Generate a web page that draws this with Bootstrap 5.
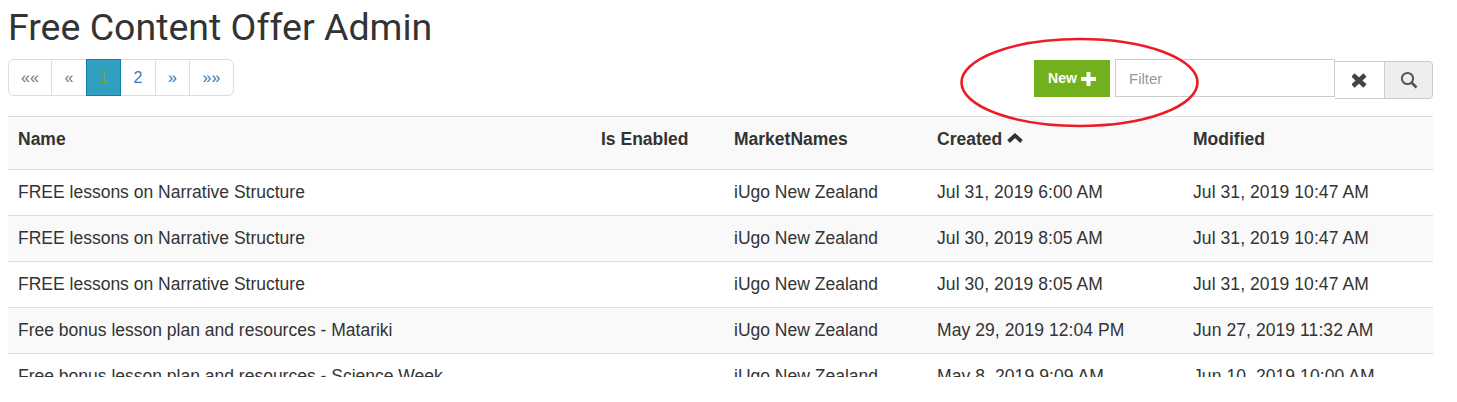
<!DOCTYPE html>
<html lang="en">
<head>
    <meta charset="UTF-8">
    <title>Free Content Offer Admin</title>
    <link href="https://cdn.jsdelivr.net/npm/bootstrap@5.3.0/dist/css/bootstrap.min.css" rel="stylesheet">
    <style>
        body { font-family: "Liberation Sans", Arial, sans-serif; font-size: 17.5px; color: #333; background: #fff; overflow: hidden; }
        .page-wrap { position: relative; padding: 7px 24px 0 8px; }
        .page-title { font-family: Roboto, sans-serif; font-size: 37.5px; font-weight: 400; line-height: 40px; margin: 0 0 12px; color: #333; }
        .toolbar { height: 57px; }
        .pager { margin: 0; }
        .pager .page-link { font-size: 16px; line-height: 20px; height: 37px; padding: 8px 0; text-align: center; color: #337ab7; border-color: #ddd; }
        .pager .page-link.muted-link { color: #777; }
        .pager .page-item.active .page-link { background: #329ec0; border-color: #0d83aa; color: #6ea82c; }
        .pg-first { width: 44px; }
        .pg-wide { width: 36px; }
        .pg-mid { width: 35px; }
        .pg-last { width: 45px; }
        .btn-new { width: 76px; height: 37px; margin-top: 1px; padding: 0; background: #72b01d; color: #fff; border: 0; border-radius: 0; font-size: 14px; font-weight: 700; }
        .btn-new:hover { background: #72b01d; color: #fff; }
        .filter-box { width: 220px; height: 38px; margin-left: 5px; border: 1px solid #ccc; border-radius: 0; padding: 6px 12px 6px 13px; font-size: 15px; font-family: "Liberation Sans", Arial, sans-serif; }
        .filter-box::placeholder { color: #999; }
        .tool-btn { width: 49px; height: 38px; margin-top: 2px; padding: 0; border: 1px solid #ccc; background: #fff; display: flex; align-items: center; justify-content: center; }
        .tool-clear { border-radius: 0; border-right: 0; border-left: 0; }
        .tool-search { background: #eee; border-radius: 0 4px 4px 0; }
        .offer-scroll { height: 261px; overflow: hidden; }
        .offer-table { margin: 0; table-layout: fixed; width: 1425px; color: #333; }
        .offer-table th, .offer-table td { padding: 0 10px; border-color: #ddd; vertical-align: middle; font-size: 17.5px; color: #333; line-height: 22px; }
        .offer-table thead tr { height: 53px; border-top: 1px solid #ddd; background: #f9f9f9; }
        .offer-table thead th { border-bottom: 1px solid #ddd; padding-bottom: 8px; }
        .offer-table tbody tr { height: 46px; }
        .offer-table tbody td { padding-bottom: 2px; }
        .offer-table tbody td:nth-child(n+4) { letter-spacing: .08px; }
        .offer-table tbody tr:nth-child(odd) td { background: #fff; }
        .offer-table tbody tr:nth-child(even) td { background: #f9f9f9; }
        .sort-arrow { vertical-align: 1px; }
        .c-name { width: 583px; }
        .c-enabled { width: 133px; }
        .c-market { width: 203px; }
        .c-created { width: 256px; }
        .red-ring { position: absolute; left: 960px; top: 37px; pointer-events: none; }
    </style>
</head>
<body>

<div class="page-wrap">
    <h1 class="page-title">Free Content Offer Admin</h1>

    <div class="toolbar d-flex justify-content-between align-items-start">
        <ul class="pagination pager">
            <li class="page-item"><a class="page-link muted-link pg-first" href="#">««</a></li>
            <li class="page-item"><a class="page-link muted-link pg-wide" href="#">«</a></li>
            <li class="page-item active"><a class="page-link pg-mid" href="#">1</a></li>
            <li class="page-item"><a class="page-link pg-wide" href="#">2</a></li>
            <li class="page-item"><a class="page-link pg-mid" href="#">»</a></li>
            <li class="page-item"><a class="page-link pg-last" href="#">»»</a></li>
        </ul>
        <div class="d-flex align-items-start">
            <button class="btn btn-new d-flex align-items-center justify-content-center gap-1" type="button">New
                <svg width="15" height="14" viewBox="0 0 15 14"><path d="M5.500 0h4v5h5.500v4h-5.500v5h-4v-5h-5.500v-4h5.500z" fill="#fff"/></svg>
            </button>
            <input class="form-control filter-box" type="text" placeholder="Filter">
            <button class="btn tool-btn tool-clear" type="button" aria-label="Clear">
                <svg width="16" height="15" viewBox="0 0 16 15"><path d="M1 2L13 13M13 2L1 13" stroke="#444" stroke-width="4.600" fill="none"/></svg>
            </button>
            <button class="btn tool-btn tool-search" type="button" aria-label="Search">
                <svg width="18" height="18" viewBox="0 0 18 18"><circle cx="7.500" cy="7.500" r="5.600" stroke="#555" stroke-width="2" fill="none"/><path d="M11.500 11.500L16.500 16.500" stroke="#555" stroke-width="2.600"/></svg>
            </button>
        </div>
    </div>

    <div class="offer-scroll">
        <table class="table offer-table">
            <colgroup>
                <col class="c-name"><col class="c-enabled"><col class="c-market"><col class="c-created"><col>
            </colgroup>
            <thead>
                <tr>
                    <th>Name</th>
                    <th>Is Enabled</th>
                    <th>MarketNames</th>
                    <th>Created
                        <svg class="sort-arrow" width="16" height="11" viewBox="0 0 16 11"><path d="M1.500 8.500L8 2.500L14.500 8.500" stroke="#333" stroke-width="3.800" fill="none"/></svg>
                    </th>
                    <th>Modified</th>
                </tr>
            </thead>
            <tbody>
                <tr><td>FREE lessons on Narrative Structure</td><td></td><td>iUgo New Zealand</td><td>Jul 31, 2019 6:00 AM</td><td>Jul 31, 2019 10:47 AM</td></tr>
                <tr><td>FREE lessons on Narrative Structure</td><td></td><td>iUgo New Zealand</td><td>Jul 30, 2019 8:05 AM</td><td>Jul 31, 2019 10:47 AM</td></tr>
                <tr><td>FREE lessons on Narrative Structure</td><td></td><td>iUgo New Zealand</td><td>Jul 30, 2019 8:05 AM</td><td>Jul 31, 2019 10:47 AM</td></tr>
                <tr><td>Free bonus lesson plan and resources - Matariki</td><td></td><td>iUgo New Zealand</td><td>May 29, 2019 12:04 PM</td><td>Jun 27, 2019 11:32 AM</td></tr>
                <tr><td>Free bonus lesson plan and resources - Science Week</td><td></td><td>iUgo New Zealand</td><td>May 8, 2019 9:09 AM</td><td>Jun 10, 2019 10:00 AM</td></tr>
            </tbody>
        </table>
    </div>

    <!-- red marker drawn over the screenshot -->
    <svg class="red-ring" width="240" height="92" viewBox="0 0 240 92">
        <ellipse cx="119.500" cy="45.500" rx="118" ry="43.500" stroke="#ed1c24" stroke-width="2.600" fill="none"/>
    </svg>
</div>

</body>
</html>
